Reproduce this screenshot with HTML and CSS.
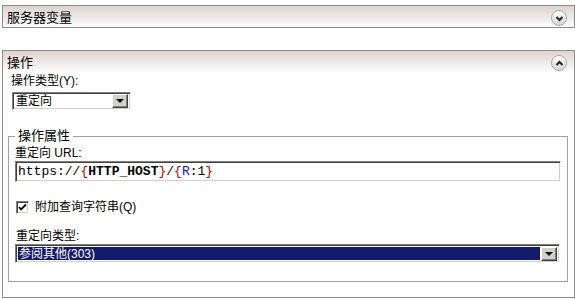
FILE: index.html
```html
<!DOCTYPE html>
<html lang="zh-CN">
  <head>
    <meta charset="UTF-8" />
    <title>操作</title>
    <link rel="stylesheet" href="styles.css">
  </head>
  <body>
    <section class="panel">
      <div class="panel-head">
        <span>服务器变量</span>
        <span class="toggle">
          <svg width="15" height="15" viewBox="0 0 15 15"><path d="M4.5 6 L7.5 9 L10.5 6" /></svg>
        </span>
      </div>
    </section>

    <section class="panel">
      <div class="panel-head">
        <span>操作</span>
        <span class="toggle">
          <svg width="15" height="15" viewBox="0 0 15 15"><path d="M4.5 9 L7.5 6 L10.5 9" /></svg>
        </span>
      </div>
      <div class="panel-body">
        <div class="group">
          <div class="label">操作类型(Y):</div>
          <div class="combo combo-small">
            <span class="combo-text">重定向</span>
            <span class="combo-btn"><i></i></span>
          </div>
        </div>

        <fieldset>
          <legend>操作属性</legend>
          <div class="label">重定向 URL:</div>
          <div class="textbox">https://<span class="br">{</span><b>HTTP_HOST</b><span class="br">}</span>/<span class="br">{</span><span class="var">R</span>:1<span class="br">}</span></div>

          <label class="check-row">
            <span class="checkbox">
              <svg width="9" height="9" viewBox="0 0 9 9"><path d="M1 4 L3 6.5 L8 1.5" /></svg>
            </span>
            附加查询字符串(Q)
          </label>

          <div class="label label-gap">重定向类型:</div>
          <div class="combo combo-wide">
            <span class="combo-text selected">参阅其他(303)</span>
            <span class="combo-btn"><i></i></span>
          </div>
        </fieldset>
      </div>
    </section>
  </body>
</html>
```

FILE: styles.css
```css
body {
  margin: 0;
  padding: 5px 0 0 2px;
  background-color: white;
  font-family: Tahoma, "Liberation Sans", "Noto Sans CJK SC", sans-serif;
  font-size: 12px;
  color: black;
}

.panel {
  border: 1px solid #8c8c8c;
  margin-bottom: 22px;
}

.panel:last-child {
  margin-bottom: 0;
}

.panel-head {
  display: flex;
  justify-content: space-between;
  align-items: center;
  height: 21px;
  padding: 0 7px 0 4px;
  background: linear-gradient(#ddd3cf, #fdfcfc);
  font-size: 13px;
}

.toggle {
  display: flex;
  width: 16px;
  height: 16px;
  border-radius: 50%;
  border: 1px solid #a9a9a9;
  background: linear-gradient(#ffffff, #d6d6d6);
  box-sizing: border-box;
  margin-top: 3px;
}

.toggle svg {
  margin: -0.5px;
}

.toggle path {
  fill: none;
  stroke: #222;
  stroke-width: 2;
}

.panel-body {
  padding: 2px 6px 15px 5px;
}

.group {
  padding-left: 3px;
}

.label {
  line-height: 14px;
}

.combo {
  display: flex;
  align-items: center;
  height: 18px;
  box-sizing: border-box;
  border-top: 1px solid #808080;
  border-left: 1px solid #808080;
  border-bottom: 1px solid #ffffff;
  border-right: 1px solid #ffffff;
  box-shadow: inset 1px 1px 0 #404040, inset -1px -1px 0 #d4d0c8;
  background-color: white;
  padding: 2px;
}

.combo-small {
  width: 119px;
  margin: 4px 0 0 1px;
}

.combo-wide {
  width: 545px;
  height: 19px;
  margin-top: 1px;
}

.combo-text {
  flex: 1;
  line-height: 14px;
  padding-left: 1px;
  white-space: nowrap;
}

.combo-text.selected {
  background-color: #141a6b;
  color: white;
  align-self: stretch;
  margin-right: 1px;
}

.combo-btn {
  display: flex;
  justify-content: center;
  align-items: center;
  width: 16px;
  height: 14px;
  box-sizing: border-box;
  background-color: #d4d0c8;
  border-top: 1px solid #ffffff;
  border-left: 1px solid #ffffff;
  border-bottom: 1px solid #404040;
  border-right: 1px solid #404040;
  box-shadow: inset -1px -1px 0 #808080;
}

.combo-btn i {
  width: 0;
  height: 0;
  border-left: 4px solid transparent;
  border-right: 4px solid transparent;
  border-top: 4px solid black;
}

fieldset {
  margin: 19px 0 0 0;
  padding: 3px 6px 18px 6px;
  border: 1px solid #a0a0a0;
  min-width: 0;
}

legend {
  padding: 0 3px;
  font-size: 13px;
  line-height: 14px;
}

.textbox {
  height: 21px;
  box-sizing: border-box;
  margin-top: 1px;
  border-top: 1px solid #808080;
  border-left: 1px solid #808080;
  border-bottom: 1px solid #ffffff;
  border-right: 1px solid #ffffff;
  box-shadow: inset 1px 1px 0 #404040, inset -1px -1px 0 #d4d0c8;
  padding: 0 2px;
  font-family: "Liberation Mono", monospace;
  font-size: 13px;
  line-height: 19px;
  white-space: nowrap;
}

.textbox b {
  font-weight: bold;
}

.textbox .br {
  color: #b00000;
}

.textbox .var {
  color: #1010d0;
}

.check-row {
  display: flex;
  align-items: center;
  gap: 6px;
  margin-top: 18px;
  padding-left: 1px;
  line-height: 14px;
}

.checkbox {
  display: flex;
  justify-content: center;
  align-items: center;
  width: 13px;
  height: 13px;
  box-sizing: border-box;
  border-top: 1px solid #808080;
  border-left: 1px solid #808080;
  border-bottom: 1px solid #ffffff;
  border-right: 1px solid #ffffff;
  box-shadow: inset 1px 1px 0 #404040, inset -1px -1px 0 #d4d0c8;
  background-color: white;
}

.checkbox path {
  fill: none;
  stroke: black;
  stroke-width: 1.8;
}

.label-gap {
  margin-top: 15px;
  padding-left: 1px;
}
```
